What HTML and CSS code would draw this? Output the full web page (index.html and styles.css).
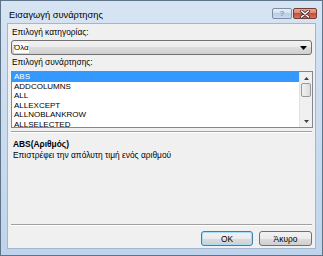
FILE: index.html
```html
<!DOCTYPE html>
<html lang="el">
<head>
    <meta charset="UTF-8">
    <title>Εισαγωγή συνάρτησης</title>
    <link rel="stylesheet" href="styles.css">
</head>
<body>

<div class="window">
    <!-- γραμμή τίτλου -->
    <div class="titlebar">
        <span class="title">Εισαγωγή συνάρτησης</span>
        <div class="caption-buttons">
            <span class="cap-btn help">?</span>
            <span class="cap-btn close">
                <svg viewBox="0 0 10 8" width="10" height="8">
                    <path d="M1.5 1 L8.5 7 M8.5 1 L1.5 7" stroke="#3b2a2a" stroke-width="3" stroke-linecap="round"/>
                    <path d="M1.5 1 L8.5 7 M8.5 1 L1.5 7" stroke="#ffffff" stroke-width="1.6" stroke-linecap="round"/>
                </svg>
            </span>
        </div>
    </div>

    <div class="client">
        <div class="field-label">Επιλογή κατηγορίας:</div>
        <div class="combo">
            <span class="combo-text">Όλα</span>
            <svg class="combo-arrow" viewBox="0 0 7 4" width="7" height="4">
                <path d="M0 0 H7 L3.5 4 Z" fill="#000"/>
            </svg>
        </div>

        <div class="field-label second">Επιλογή συνάρτησης:</div>
        <div class="listbox">
            <ul class="items">
                <li class="item selected">ABS</li>
                <li class="item">ADDCOLUMNS</li>
                <li class="item">ALL</li>
                <li class="item">ALLEXCEPT</li>
                <li class="item">ALLNOBLANKROW</li>
                <li class="item">ALLSELECTED</li>
            </ul>
            <div class="scrollbar">
                <svg class="sb-arrow" viewBox="0 0 5 3" width="5" height="3">
                    <path d="M0 3 L2.5 0 L5 3 Z" fill="#404040"/>
                </svg>
                <div class="sb-track">
                    <div class="sb-thumb"></div>
                </div>
                <svg class="sb-arrow" viewBox="0 0 5 3" width="5" height="3">
                    <path d="M0 0 H5 L2.5 3 Z" fill="#404040"/>
                </svg>
            </div>
        </div>

        <div class="separator"></div>

        <div class="desc">
            <div class="sig">ABS(Αριθμός)</div>
            <div class="desc-text">Επιστρέφει την απόλυτη τιμή ενός αριθμού</div>
        </div>

        <div class="separator bottom"></div>

        <div class="buttons">
            <button class="btn default">OK</button>
            <button class="btn">Άκυρο</button>
        </div>
    </div>
</div>

</body>
</html>
```

FILE: styles.css
```css
* {
    margin: 0;
    padding: 0;
    box-sizing: border-box;
}

body, html {
    width: 100%;
    height: 100%;
    overflow: hidden;
    background-color: #ffffff;
    font-family: "Liberation Sans", Arial, sans-serif;
    font-size: 8.4px;
    color: #000;
}

/* παράθυρο */
.window {
    width: 323px;
    height: 256px;
    border: 1px solid #5f7389;
    background: linear-gradient(#d6e4f3, #bfd4ec);
    display: flex;
    flex-direction: column;
}

.titlebar {
    height: 22px;
    display: flex;
    justify-content: space-between;
    padding: 0 5px 0 8px;
}

.title {
    font-size: 9.3px;
    line-height: 11px;
    padding-top: 9px;
}

.caption-buttons {
    display: flex;
    gap: 1px;
    margin-top: 7px;
    height: 11px;
}

.cap-btn {
    display: flex;
    align-items: center;
    justify-content: center;
    height: 11px;
    border: 1px solid #7c8ea4;
    border-radius: 2px;
}

.cap-btn.help {
    width: 20px;
    background: linear-gradient(#e6eef8 0%, #d2dfee 50%, #bccde2 50%, #cbdaee 100%);
    color: #8a9cb2;
    font-size: 8px;
    font-weight: bold;
}

.cap-btn.close {
    width: 24px;
    border-color: #7a3a33;
    background: linear-gradient(#e8a796 0%, #d8826f 50%, #c3503c 50%, #d0735f 100%);
}

/* περιοχή περιεχομένου */
.client {
    flex: 1;
    margin: 0 6px 6px 6px;
    border: 1px solid #a3b6cc;
    background-color: #f0f0f0;
    padding: 3px 3px 2px 3px;
    display: flex;
    flex-direction: column;
}

.field-label {
    line-height: 10px;
    padding-left: 1px;
}

.field-label.second {
    margin-top: 2px;
}

.combo {
    margin-top: 3px;
    height: 15px;
    border: 1px solid #707070;
    border-radius: 3px;
    background: linear-gradient(#f2f2f2 0%, #ebebeb 50%, #dddddd 50%, #cfcfcf 100%);
    display: flex;
    align-items: center;
    justify-content: space-between;
    padding: 0 4px 0 2px;
}

.combo-text {
    background-color: #ffffff;
    line-height: 10px;
    font-size: 8px;
}

.listbox {
    margin-top: 4px;
    height: 57px;
    margin-right: -1px;
    border: 1px solid #828790;
    background-color: #ffffff;
    display: flex;
}

.items {
    list-style: none;
    flex: 1;
}

.item {
    height: 9.5px;
    line-height: 9.5px;
    padding-left: 2px;
    font-size: 8px;
}

.item.selected {
    background-color: #3399ff;
    color: #ffffff;
}

.scrollbar {
    width: 13px;
    background-color: #f0f0f0;
    border-left: 1px solid #e2e2e2;
    display: flex;
    flex-direction: column;
    align-items: center;
    padding: 5px 0 4px 0;
}

.sb-track {
    flex: 1;
    width: 100%;
    padding: 3px 1px 0 1px;
}

.sb-thumb {
    height: 14px;
    border: 1px solid #979797;
    border-radius: 2px;
    background: linear-gradient(90deg, #f1f1f1, #dcdcdc);
}

.separator {
    margin-top: 3px;
    border-top: 1px solid #a0a0a0;
    border-bottom: 1px solid #ffffff;
}

.desc {
    margin-top: 6px;
    padding-left: 2px;
    flex: 1;
}

.sig {
    font-weight: bold;
    line-height: 10px;
}

.desc-text {
    margin-top: 1px;
    line-height: 10px;
}

.separator.bottom {
    margin-top: 0;
}

.buttons {
    margin-top: 5px;
    display: flex;
    justify-content: flex-end;
    gap: 6px;
}

.btn {
    height: 15px;
    width: 53px;
    border: 1px solid #707070;
    border-radius: 3px;
    background: linear-gradient(#f2f2f2 0%, #ebebeb 50%, #dddddd 50%, #cfcfcf 100%);
    font-family: "Liberation Sans", Arial, sans-serif;
    font-size: 8.4px;
    color: #000;
}

.btn.default {
    width: 52px;
    border-color: #3c7fb1;
    box-shadow: inset 0 0 0 1px #a9dcf6;
}
```
